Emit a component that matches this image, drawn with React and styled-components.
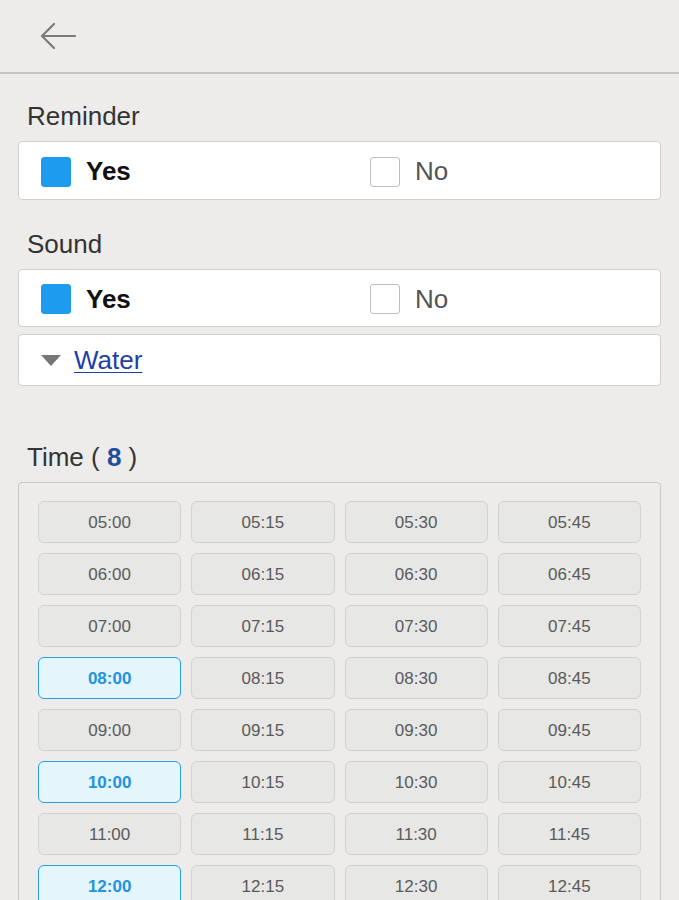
import React, { useState } from 'react'
import styled, { createGlobalStyle } from 'styled-components'

const GlobalStyle = createGlobalStyle`
  html, body {
    margin: 0;
    padding: 0;
    background: #edecea;
    font-family: 'Liberation Sans', Arial, sans-serif;
  }
`

const Page = styled.div`
  min-height: 100vh;
  background: #edecea;
`

const Header = styled.div`
  height: 72px;
  border-bottom: 2px solid #c4c4c2;
  display: flex;
  align-items: center;
  padding-left: 39px;
`

const BackButton = styled.button`
  background: none;
  border: none;
  padding: 0;
  display: flex;
  cursor: pointer;
`

const Content = styled.div`
  padding: 0 18px;
`

const Label = styled.div`
  font-size: 26px;
  line-height: 30px;
  color: #333;
  padding: ${p => p.$top || 27}px 9px 10px;
`

const Count = styled.span`
  color: #1f4c9c;
  font-weight: bold;
`

const Box = styled.div`
  background: #fff;
  border: 1px solid #cfcfcd;
  border-radius: 4px;
  height: ${p => p.$h || 57}px;
  display: flex;
  align-items: center;
  margin-bottom: ${p => p.$mb || 0}px;
`

const Option = styled.label`
  display: flex;
  align-items: center;
  gap: 15px;
  padding-left: 22px;
  padding-top: 2px;
  width: ${p => p.$w || 'auto'};
  font-size: 26px;
  color: ${p => (p.$bold ? '#111' : '#555')};
  font-weight: ${p => (p.$bold ? 'bold' : 'normal')};
  cursor: pointer;
`

const Check = styled.span`
  width: 30px;
  height: 30px;
  box-sizing: border-box;
  border-radius: 3px;
  background: ${p => (p.$on ? '#1d9cef' : '#fff')};
  border: 1px solid ${p => (p.$on ? '#1d9cef' : '#bdbdbd')};
`

const Triangle = styled.span`
  width: 0;
  height: 0;
  margin-left: 22px;
  margin-right: 13px;
  border-left: 10px solid transparent;
  border-right: 10px solid transparent;
  border-top: 11px solid #777;
`

const SoundLink = styled.a`
  font-size: 26px;
  color: #1f40a6;
  text-decoration: underline;
  text-underline-offset: 3px;
  text-decoration-thickness: 1px;
`

const TimePanel = styled.div`
  border: 1px solid #c8c8c6;
  border-radius: 4px;
  padding: 18px 19px;
  display: grid;
  grid-template-columns: repeat(4, 1fr);
  column-gap: 10px;
  row-gap: 10px;
`

const TimeButton = styled.button`
  height: 42px;
  padding: 2px 0 0;
  border-radius: 6px;
  font-family: 'Liberation Sans', Arial, sans-serif;
  font-size: 17px;
  background: ${p => (p.$on ? '#e4f5fb' : '#e7e7e6')};
  border: 1px solid ${p => (p.$on ? '#2a9de3' : '#d2d2d0')};
  color: ${p => (p.$on ? '#2294dc' : '#5a5a5a')};
  font-weight: ${p => (p.$on ? 'bold' : 'normal')};
  cursor: pointer;
`

const pad = n => String(n).padStart(2, '0')
const times = []
for (let h = 5; h <= 12; h++) {
  for (const m of [0, 15, 30, 45]) times.push(`${pad(h)}:${pad(m)}`)
}

function YesNo({ value, onChange }) {
  return (
    <>
      <Option $w="307px" $bold onClick={() => onChange(true)}>
        <Check $on={value} />
        Yes
      </Option>
      <Option onClick={() => onChange(false)}>
        <Check $on={!value} />
        No
      </Option>
    </>
  )
}

export default function App() {
  const [reminder, setReminder] = useState(true)
  const [sound, setSound] = useState(true)
  const [picked, setPicked] = useState(['08:00', '10:00', '12:00', '14:00', '16:00', '18:00', '20:00', '22:00'])

  const toggle = t =>
    setPicked(p => (p.includes(t) ? p.filter(x => x !== t) : [...p, t]))

  return (
    <Page>
      <GlobalStyle />
      <Header>
        <BackButton aria-label="Back">
          <svg width="38" height="30" viewBox="0 0 38 30" fill="none" stroke="#7a7a7a" strokeWidth="2.2" strokeLinecap="round" strokeLinejoin="round">
            <path d="M36 15H3" />
            <path d="M15 3L3 15l12 12" />
          </svg>
        </BackButton>
      </Header>
      <Content>
        <Label>Reminder</Label>
        <Box>
          <YesNo value={reminder} onChange={setReminder} />
        </Box>
        <Label $top={29}>Sound</Label>
        <Box $mb={7} $h={56}>
          <YesNo value={sound} onChange={setSound} />
        </Box>
        <Box $h={50}>
          <Triangle />
          <SoundLink>Water</SoundLink>
        </Box>
        <Label $top={56}>
          Time ( <Count>{picked.length}</Count> )
        </Label>
        <TimePanel>
          {times.map(t => (
            <TimeButton key={t} $on={picked.includes(t)} onClick={() => toggle(t)}>
              {t}
            </TimeButton>
          ))}
        </TimePanel>
      </Content>
    </Page>
  )
}
